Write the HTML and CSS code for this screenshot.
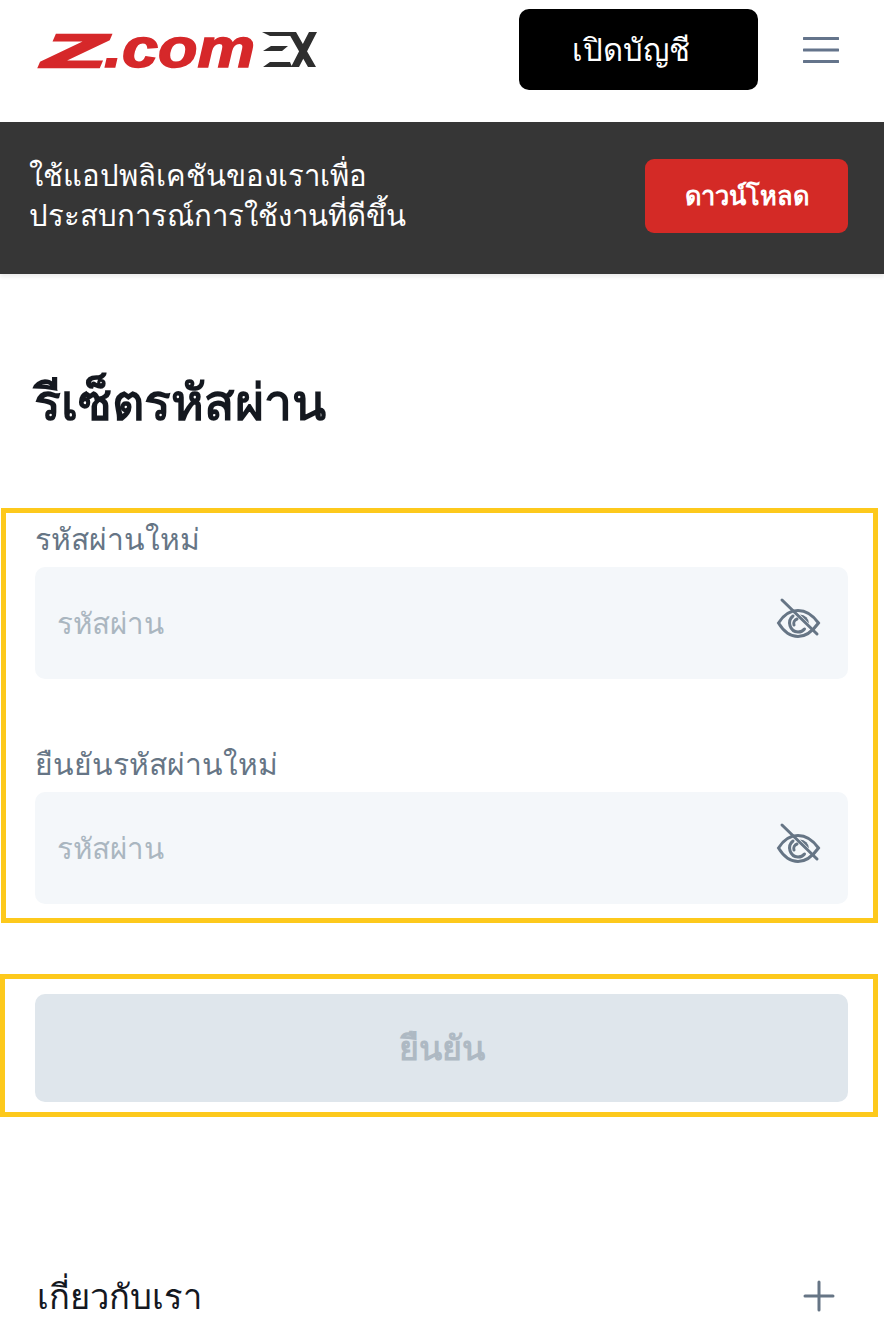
FILE: index.html
```html
<!DOCTYPE html>
<html lang="th">
<head>
<meta charset="utf-8">
<title>รีเซ็ตรหัสผ่าน</title>
<link rel="stylesheet" href="styles.css">
</head>
<body>
<header class="top">
  <svg class="logo" viewBox="0 0 280 40" width="280" height="40" aria-label="Z.com EX">
    <text class="logo-z logo-big" x="5" y="36.500" textLength="63" lengthAdjust="spacingAndGlyphs">Z</text>
    <text class="logo-z logo-small" x="66" y="36.500" textLength="151" lengthAdjust="spacingAndGlyphs">.com</text>
    <path class="logo-ex" d="M224 2h26l4 4h-22zM233 16h17l-6 5h-19zM232 32h20l2 5h-29zM250 2h8l20 35h-8zM271 2h8l-18 35h-8z"/>
  </svg>
  <a class="open-btn">เปิดบัญชี</a>
  <svg class="burger" viewBox="0 0 36 28" width="36" height="28"><path d="M1 2.500h34M1 14h34M1 25.500h34"/></svg>
</header>
<section class="banner">
  <p class="banner-text">ใช้แอปพลิเคชันของเราเพื่อ<br>ประสบการณ์การใช้งานที่ดีขึ้น</p>
  <a class="download">ดาวน์โหลด</a>
</section>
<main class="content">
  <h1 class="title">รีเซ็ตรหัสผ่าน</h1>
  <div class="mark mark-form">
    <div class="field">
      <label class="label">รหัสผ่านใหม่</label>
      <div class="input">
        <span class="placeholder">รหัสผ่าน</span>
        <svg class="eye" viewBox="0 0 48 48" width="48" height="48"><path d="M3.500 24C9 15 15 11.500 23 11.500S37 15 43.500 24C37 33 31 37.500 23 37.500S9 33 3.500 24z"/><path d="M18 17a9 9 0 0 0 5 16c3 0 5-1 6.500-3"/><path d="M22 20a4.800 4.800 0 0 0-3 6"/><path class="iris" d="M25 15.500l9 9a9 9 0 0 0-9-9z"/><path class="slash" d="M7 1l35 34"/></svg>
      </div>
    </div>
    <div class="field">
      <label class="label">ยืนยันรหัสผ่านใหม่</label>
      <div class="input">
        <span class="placeholder">รหัสผ่าน</span>
        <svg class="eye" viewBox="0 0 48 48" width="48" height="48"><path d="M3.500 24C9 15 15 11.500 23 11.500S37 15 43.500 24C37 33 31 37.500 23 37.500S9 33 3.500 24z"/><path d="M18 17a9 9 0 0 0 5 16c3 0 5-1 6.500-3"/><path d="M22 20a4.800 4.800 0 0 0-3 6"/><path class="iris" d="M25 15.500l9 9a9 9 0 0 0-9-9z"/><path class="slash" d="M7 1l35 34"/></svg>
      </div>
    </div>
  </div>
  <div class="mark mark-btn">
    <button class="submit">ยืนยัน</button>
  </div>
  <div class="about">
    <span class="about-text">เกี่ยวกับเรา</span>
    <svg class="plus" viewBox="0 0 32 32" width="32" height="32"><path d="M16 2v28M2 16h28"/></svg>
  </div>
</main>
</body>
</html>
```
FILE: styles.css
```css
* { box-sizing: border-box; }
html, body { margin: 0; padding: 0; }
body {
  width: 884px;
  height: 1330px;
  overflow: hidden;
  background: #fff;
  font-family: "Noto Sans", "Liberation Sans", "DejaVu Sans", sans-serif;
  color: #111;
}
.top {
  height: 122px;
  display: flex;
  align-items: flex-start;
  padding: 9px 46px 0 38px;
}
.logo { margin-top: 21px; flex: none; overflow: visible; }
.logo-z {
  font-family: "Liberation Sans", sans-serif;
  font-weight: 700;
  font-style: italic;
  fill: #d6282a;
  stroke: #d6282a;
}
.logo-big { font-size: 47px; stroke-width: 2.500px; }
.logo-small { font-size: 56px; stroke-width: 1.500px; }
.logo-ex { fill: #2e2e2e; }
.open-btn {
  margin-left: 201px;
  width: 239px;
  height: 81px;
  flex: none;
  background: #000;
  color: #fff;
  border-radius: 10px;
  font-size: 31px;
  display: flex;
  align-items: center;
  justify-content: center;
  padding-right: 16px;
}
.burger { margin: 27px 0 0 45px; flex: none; }
.burger path { fill: none; stroke: #64748b; stroke-width: 3; stroke-linecap: round; }
.banner {
  height: 152px;
  background: #363636;
  display: flex;
  align-items: flex-start;
  justify-content: space-between;
  padding: 33px 36px 0 29px;
  box-shadow: 0 3px 4px rgba(0, 0, 0, 0.08);
}
.banner-text { margin: 0; color: #fff; font-size: 29.300px; line-height: 40px; }
.download {
  width: 203px;
  height: 74px;
  margin-top: 4px;
  background: #d42a26;
  color: #fff;
  border-radius: 9px;
  font-size: 25.400px;
  font-weight: 700;
  display: flex;
  align-items: center;
  justify-content: center;
}
.content { display: flex; flex-direction: column; }
.title {
  margin: 92px 0 0 34px;
  height: 142px;
  font-size: 50px;
  line-height: 70px;
  font-weight: 700;
  color: #14181f;
}
.mark {
  border: 5px solid #fdc91c;
  width: 877px;
  margin-left: 1px;
  padding-left: 29px;
  padding-right: 25px;
}
.mark-form { height: 415px; display: flex; flex-direction: column; gap: 59px; }
.field { display: flex; flex-direction: column; }
.label { height: 54px; font-size: 30px; line-height: 52px; color: #667585; }
.input {
  height: 112px;
  background: #f4f7fa;
  border-radius: 10px;
  display: flex;
  align-items: center;
  justify-content: space-between;
  padding: 0 25px 0 22px;
}
.placeholder { font-size: 29.500px; color: #aab6c0; }
.eye { flex: none; overflow: visible; }
.eye path { fill: none; stroke: #667585; stroke-width: 3; stroke-linecap: round; }
.eye .iris { fill: #667585; stroke: none; }
.mark-btn {
  height: 143px;
  width: 878px;
  margin-left: 0;
  margin-top: 51px;
  padding-top: 15px;
  padding-left: 30px;
}
.submit {
  width: 813px;
  height: 108px;
  background: #dfe6ec;
  border: 0;
  border-radius: 10px;
  color: #aeb9c3;
  font: inherit;
  font-size: 34px;
  font-weight: 600;
}
.about {
  margin-top: 137px;
  padding: 0 49px 0 37px;
  display: flex;
  align-items: center;
  justify-content: space-between;
  height: 84px;
}
.about-text { font-size: 34.500px; color: #14181f; }
.plus path { fill: none; stroke: #667585; stroke-width: 3; stroke-linecap: round; }
```
